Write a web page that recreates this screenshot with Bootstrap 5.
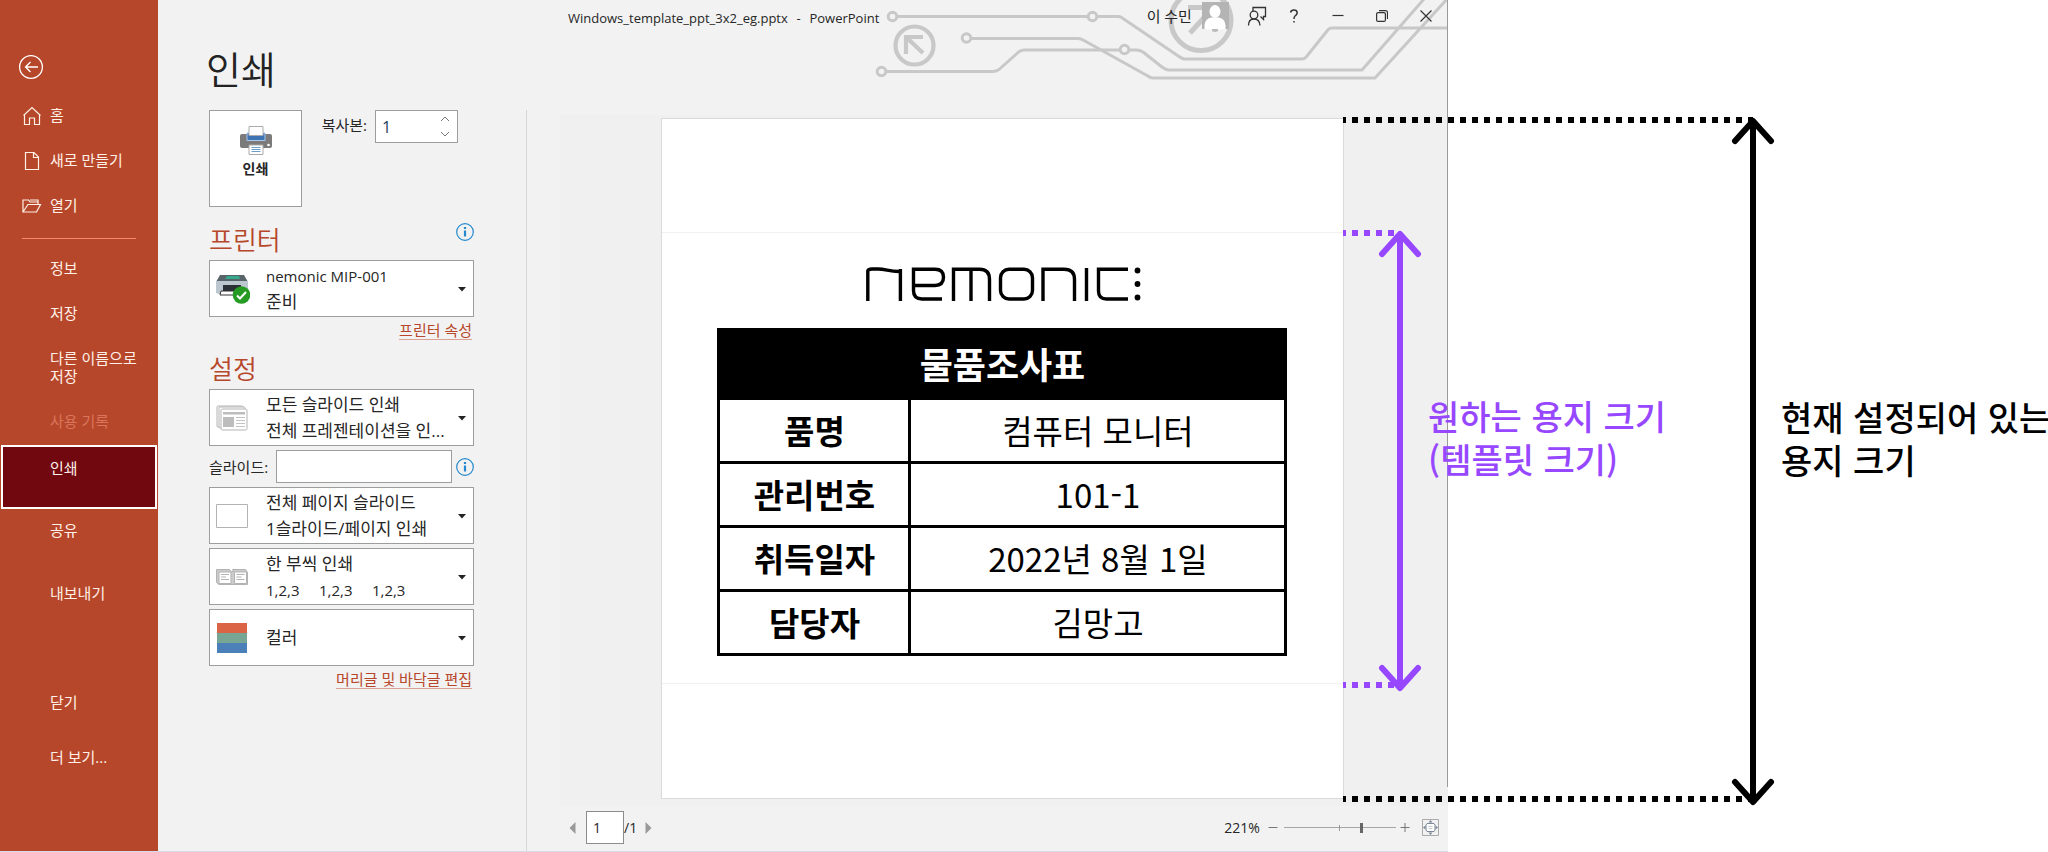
<!DOCTYPE html>
<html lang="ko">
<head>
<meta charset="utf-8">
<meta name="viewport" content="width=device-width, initial-scale=1">
<title>Windows_template_ppt_3x2_eg.pptx - PowerPoint</title>
<link href="https://cdn.jsdelivr.net/npm/bootstrap@5.3.0/dist/css/bootstrap.min.css" rel="stylesheet">
<style>
  :root { --brand: #b7472a; --pane: #f2f2f2; --edge: #9d9d9d; --ink: #262626; --guide: #9747ff; }
  body { font-family: "Open Sans", "Noto Sans CJK KR", sans-serif; font-size: 15px; line-height: 22px; color: var(--ink); background: #fff; overflow: hidden; }
  button { color: inherit; }
  .app { width: 70.7vw; min-height: 100vh; background: var(--pane); border-bottom: 1px solid #d5d9ea; position: relative; }
  .app::after { content: ""; position: absolute; top: 0; right: 0; bottom: 64px; width: 1px; background: #9a9a9a; }

  /* backstage navigation */
  .side { width: 158px; background: var(--brand); color: #fff; padding-top: 40px; padding-bottom: 66px; }
  .side a { color: #fff0e8; text-decoration: none; display: flex; min-height: 45px; padding: 12px 20px 10px 50px; line-height: 18px; }
  .side a.with-icon { padding-left: 22px; gap: 8px; }
  .side a.back { padding: 0 0 0 18px; min-height: 54px; }
  .side a.tall { min-height: 63px; }
  .side a.disabled { color: #d9755c; pointer-events: none; }
  .side a.active { background: #710810; border: 2px solid #fff; min-height: 64px; margin: 0 1px; padding-left: 47px; }
  .side a.low { min-height: 55px; padding-top: 18px; }
  .side hr { margin: 9px 22px 8px; border-top: 1px solid #f58b69; opacity: 1; }

  /* title bar */
  .titlebar { height: 32px; position: relative; }
  .titlebar .doc { font-size: 13px; line-height: 18px; padding: 9px 0 0 410px; white-space: pre; position: relative; }
  .titlebar .doc span { margin: 0 2px; }
  .titlebar .who { position: relative; }
  .circuit { position: absolute; top: 0; right: 0; }
  .win-btn { width: 44px; height: 32px; border: 0; background: none; padding: 0; display: flex; align-items: center; justify-content: center; }
  .win-btn.slim { width: 30px; }

  /* print settings */
  .settings { width: 369px; padding: 14px 0 0 51px; }
  .settings h1 { font-size: 38px; line-height: 46px; margin: 0 0 18px -3px; font-weight: 350; color: #222; }
  .settings h2 { font-size: 26px; line-height: 34px; margin: 0 0 3px; color: var(--brand); font-weight: 350; }
  .settings-body { border-right: 1px solid #d6d6d6; padding-right: 52px; }
  .print-btn { width: 93px; height: 97px; border: 1px solid var(--edge); background: #fff; font-size: 14px; font-weight: 700; padding: 0 0 12px; gap: 3px; }
  .box { border: 1px solid var(--edge); border-radius: 0; background: #fff; height: 33px; }
  .copies { width: 83px; position: relative; }
  .copies input { border: 0; width: 60px; background: none; padding: 0 0 0 6px; font-size: 16px; color: #24405c; appearance: textfield; -moz-appearance: textfield; outline: 0; }
  .copies input::-webkit-inner-spin-button { appearance: none; margin: 0; }
  .copies .spin { width: 18px; }
  .copies .spin button { border: 0; background: none; padding: 0; line-height: 0; flex: 1; }
  .picker { width: 100%; height: 57px; border: 1px solid var(--edge); background: #fff; display: flex; align-items: center; text-align: left; padding: 0 6px; font-size: 17px; line-height: 26px; }
  .picker svg.pic { width: 34px; flex: none; margin-right: 16px; }
  .picker .lines { flex: 1; min-width: 0; white-space: pre; }
  .latin { font-size: 15px; }
  .more-link { color: var(--brand); text-decoration: none; border-bottom: 1px solid #dba294; line-height: 17px; display: inline-block; }
  .link-row { text-align: right; line-height: 20px; padding: 3px 2px 0 0; margin-bottom: 12px; }
  .info { width: 18px; height: 18px; padding: 0; border: 0; background: none; line-height: 0; }

  /* preview */
  .stage { margin: 83px 0 0 33px; background: #f0f0f0; padding: 3px 3px 7px 0; }
  .slide { width: 77.2%; aspect-ratio: 683 / 681; background: #fff; border: 1px solid #dadada; position: relative; display: grid; grid-template-rows: 113fr 452fr 114fr; }
  .template { border-top: 1px solid #f1f1f1; border-bottom: 1px solid #f1f1f1; position: relative; padding-top: 34px; }
  .sheet { width: 570px; margin-top: 27px; table-layout: fixed; border-collapse: collapse; color: #000; text-align: center; font-family: "Noto Sans CJK KR", sans-serif; font-size: 33px; line-height: 40px; }
  .sheet col.key { width: 191px; }
  .sheet th, .sheet td { border: 3px solid #000; height: 64px; padding: 0 0 2px; vertical-align: middle; }
  .sheet td { font-weight: 400; }
  .sheet thead th { background: #000; color: #fff; font-size: 36px; height: 69px; }

  /* measuring guides laid over the preview */
  .measure { position: absolute; left: 100%; display: flex; z-index: 2; color: var(--guide); }
  .measure .rail { position: relative; width: 57px; flex: none; }
  .measure .rail::before, .measure .rail::after { content: ""; position: absolute; left: 0; right: 0; height: 6px; background: repeating-linear-gradient(90deg, currentColor 0 3px, transparent 3px 9px, currentColor 9px 12px) 0 0 / 12px 6px; }
  .measure .rail::before { top: 0; }
  .measure .rail::after { bottom: 0; }
  .measure .shaft { position: absolute; right: -3px; top: 6px; bottom: 4px; width: 6px; background: currentColor; }
  .measure svg { position: absolute; right: -22px; }
  .measure .head-up { top: 0; }
  .measure .head-down { bottom: -4px; }
  .measure p { margin: 0; align-self: center; font-family: "Noto Sans CJK KR", sans-serif; font-weight: 500; font-size: 34px; line-height: 43px; white-space: nowrap; padding: 0 0 44px 28px; }
  .measure.template-size { top: -3px; bottom: -5px; }
  .measure.paper-size { top: -2px; bottom: -4px; color: #000; }
  .measure.paper-size .rail { width: 410px; }

  /* footer */
  .foot { height: 43px; margin: 0 9px 0 42px; font-size: 14px; }
  .foot button { border: 0; background: none; padding: 0; line-height: 0; }
  .foot .page-no { width: 38px; height: 33px; border: 1px solid #8c8c8c; padding: 0 0 0 6px; margin: 0 0 0 10px; color: inherit; }
  .zoomer { width: 112px; height: 12px; appearance: none; -webkit-appearance: none; margin: 0 4px 0 6px; background: linear-gradient(#999, #999) 50% 3px / 1px 6px no-repeat, linear-gradient(#a5a5a5, #a5a5a5) 0 5px / 100% 1px no-repeat; }
  .zoomer::-webkit-slider-thumb { -webkit-appearance: none; width: 3px; height: 10px; background: #666; border: 0; }
</style>
</head>
<body>
<div class="app d-flex">
  <nav class="side d-flex flex-column flex-shrink-0" aria-label="파일">
    <a href="#" class="back align-items-center" aria-label="뒤로">
      <svg width="26" height="26" viewBox="0 0 26 26" fill="none" stroke="#fff" stroke-width="1.3"><circle cx="13" cy="13" r="11.4"/><path d="M20 13H7.500M12.500 8l-5 5 5 5"/></svg>
    </a>
    <a href="#" class="with-icon"><svg width="20" height="20" viewBox="0 0 20 20" fill="none" stroke="#fff0e8" stroke-width="1.2"><path d="M1.500 9.500 10 1.500l8.500 8M2.500 9v9.500h5V12h5v6.500h5V9"/></svg>홈</a>
    <a href="#" class="with-icon"><svg width="20" height="20" viewBox="0 0 20 20" fill="none" stroke="#fff0e8" stroke-width="1.200"><path d="M3.500 1.500h8.500l4.500 4.500v12.500h-13zM11.500 1.500V6.500h5"/></svg>새로 만들기</a>
    <a href="#" class="with-icon"><svg width="20" height="20" viewBox="0 0 20 20" fill="none" stroke="#fff0e8" stroke-width="1.200"><path d="M1 16V4h5.500l1.500 2h8v2.500M1 16 6 8.500h12.500L14.500 16zM8 4h8v2"/></svg>열기</a>
    <hr>
    <a href="#">정보</a>
    <a href="#">저장</a>
    <a href="#" class="tall">다른 이름으로<br>저장</a>
    <a href="#" class="disabled" aria-disabled="true">사용 기록</a>
    <a href="#" class="active" aria-current="page">인쇄</a>
    <a href="#" class="tall">공유</a>
    <a href="#" class="tall">내보내기</a>
    <div class="mt-auto">
      <a href="#" class="low">닫기</a>
      <a href="#" class="low">더 보기...</a>
    </div>
  </nav>

  <div class="d-flex flex-column flex-grow-1">
    <header class="titlebar d-flex justify-content-between">
      <svg class="circuit" width="575" height="85" viewBox="873 0 575 85" fill="none" stroke="#c8c8c8" stroke-width="3" stroke-linejoin="round" aria-hidden="true">
        <path d="M897 16.500H1088M1097 16.500h21q3 0 5 2l56 38q3 2.500 6 2.500h117q3 0 5-3l20-25q2-3 5-3h116"/>
        <path d="M971 38.500h107q3 0 6 2l63 35q3 2.500 6 2.500h222l73-80"/>
        <path d="M886 71.500h107q3 0 6-2l19-17q3-2.500 6-2.500h95M1129 50h7q4 0 7 2l19 15q4 3 7 3h193l62-71"/>
        <circle cx="892.500" cy="16.500" r="4.300"/><circle cx="1092.500" cy="16.500" r="4.300"/><circle cx="966.500" cy="38" r="4.300"/><circle cx="881.500" cy="71.500" r="4.300"/><circle cx="1124.500" cy="49.500" r="4.300"/>
        <g stroke-width="4.200" stroke-linejoin="miter"><circle cx="914.500" cy="45.500" r="19"/><path d="M906 54V37h17M906 37l17 16"/></g>
        <g stroke-width="5"><circle cx="1201" cy="20.500" r="30"/><path d="M1188 7.500h22M1190 33l20-22"/></g>
      </svg>
      <div class="doc">Windows_template_ppt_3x2_eg.pptx  <span>-</span>  PowerPoint</div>
      <div class="who d-flex align-items-center">
        <span>이 수민</span>
        <svg class="ms-1 me-2" width="34" height="32" viewBox="1195 0 34 32" aria-hidden="true"><path fill="#b4b4b4" d="M1201 2h27v27h-27z"/><g fill="#fff"><ellipse cx="1214" cy="11.500" rx="5.500" ry="6.500"/><path d="M1203.500 29v-4q1-7 7-7.500h7q6 .5 7 7.500v4q-10.500 1-21 0z"/></g><path fill="#bbb" d="M1211 29h6v2q-3 2-6 0z"/></svg>
        <button class="win-btn slim ms-1" aria-label="피드백"><svg width="20" height="21" viewBox="0 0 20 21" fill="none" stroke="#333" stroke-width="1.300"><path d="M6 5V1.500h12.500v9h-2v3l-3-3M1.500 19.500q0-6.500 5.500-6.500t6 6.500"/><circle cx="7" cy="9" r="3.800"/></svg></button>
        <button class="win-btn" aria-label="도움말"><svg width="10" height="14" viewBox="0 0 10 14" fill="none" stroke="#333" stroke-width="1.500"><path d="M1.500 3.500Q2 1 5 1t3.200 2.800Q8.200 5.500 6 7 5 7.800 5 10M5 12v1.500"/></svg></button>
        <button class="win-btn" aria-label="최소화"><svg width="12" height="12" viewBox="0 0 12 12" stroke="#333" stroke-width="1.200"><path d="M.500 5.500h11"/></svg></button>
        <button class="win-btn" aria-label="이전 크기로 복원"><svg width="12" height="12" viewBox="0 0 12 12" fill="none" stroke="#333" stroke-width="1.200"><rect x=".600" y="2.600" width="8.800" height="8.800" rx="1.500"/><path d="M3 .600h6.500q2 0 2 2V9"/></svg></button>
        <button class="win-btn" aria-label="닫기"><svg width="12" height="12" viewBox="0 0 12 12" stroke="#333" stroke-width="1.200"><path d="M.500.500l11 11M11.500.500l-11 11"/></svg></button>
      </div>
    </header>

    <div class="d-flex flex-grow-1">
      <section class="settings d-flex flex-column flex-shrink-0">
        <h1>인쇄</h1>
        <div class="settings-body flex-grow-1">
          <div class="d-flex align-items-start">
            <button class="print-btn d-flex flex-column align-items-center justify-content-center">
              <svg width="34" height="30" viewBox="0 0 34 30" aria-hidden="true"><rect x="1" y="9" width="32" height="14" rx="2" fill="#7b7b7b"/><path fill="#3f74b5" stroke="#a9c8ea" d="M8 8h18v7.500H8z"/><path fill="#fff" stroke="#aaa" d="M10 1.500h14v9H10zM10 20h14v9.500H10z"/><path stroke="#6ba0cc" d="M12.500 22.500h9M12.500 24.500h9M12.500 26.500h9"/><circle cx="29.500" cy="20" r="1.300" fill="#fff"/></svg>
              인쇄
            </button>
            <label class="ms-auto me-2 pt-1" for="copies">복사본:</label>
            <div class="box copies d-flex me-3">
              <input id="copies" type="number" value="1" min="1">
              <div class="spin d-flex flex-column">
                <button aria-label="늘리기"><svg width="10" height="6" viewBox="0 0 10 6" fill="none" stroke="#777"><path d="M1 5l4-4 4 4"/></svg></button>
                <button aria-label="줄이기"><svg width="10" height="6" viewBox="0 0 10 6" fill="none" stroke="#777"><path d="M1 1l4 4 4-4"/></svg></button>
              </div>
            </div>
          </div>

          <div class="d-flex justify-content-between mt-3">
            <h2>프린터</h2>
            <button class="info" aria-label="프린터 정보"><svg width="18" height="18" viewBox="0 0 18 18" fill="none" stroke="#2489ce"><circle cx="9" cy="9" r="8.300" stroke-width="1.200"/><path stroke-width="2.200" d="M9 7.500V13.500M9 4v2"/></svg></button>
          </div>
          <button class="picker" aria-haspopup="listbox">
            <svg class="pic" height="32" viewBox="0 0 34 32" aria-hidden="true"><path fill="#59636a" d="M4 2h24l4 7H0z"/><path fill="#36a98b" d="M11 3h12l1 3H9z"/><path fill="#bcc6ce" d="M0 8h32v12l-3 1H3l-3-1z"/><path fill="#2b3036" d="M7 12h18v7H7z"/><path fill="#fff" stroke="#333" d="M5 18h20l2 4H4z"/><circle cx="25.500" cy="22" r="8.800" fill="#259b24"/><path fill="none" stroke="#fff" stroke-width="2" d="M21 22.500l3 3 6-6.500"/></svg>
            <span class="lines"><span class="latin">nemonic MIP-001</span><br>준비</span>
            <svg width="10" height="6" viewBox="0 0 10 6"><path fill="#222" d="M1 1h8L5 5.500z"/></svg>
          </button>
          <div class="link-row"><a href="#" class="more-link">프린터 속성</a></div>

          <h2>설정</h2>
          <div class="d-grid gap-1">
            <button class="picker" aria-haspopup="listbox">
              <svg class="pic" height="26" viewBox="0 0 34 26" fill="#fff" stroke="#b3b3b3" aria-hidden="true"><rect x="1" y="1" width="26" height="21" rx="1"/><rect x="3" y="2" width="26" height="21" rx="1"/><rect x="5" y="4" width="26" height="21" rx="1.500"/><path fill="#bdbdbd" stroke="none" d="M7 7h22v2.500H7zM7 12h11v10H7z"/><path stroke="#c4c4c4" d="M20 12.500h9M20 15.500h9M20 18.500h9M20 21.500h9"/></svg>
              <span class="lines">모든 슬라이드 인쇄<br>전체 프레젠테이션을 인...</span>
              <svg width="10" height="6" viewBox="0 0 10 6"><path fill="#222" d="M1 1h8L5 5.500z"/></svg>
            </button>
            <div class="d-flex align-items-center">
              <label for="range">슬라이드:</label>
              <input id="range" class="box flex-grow-1 ms-2" type="text" size="1">
              <button class="info ms-1" aria-label="슬라이드 범위 정보"><svg width="18" height="18" viewBox="0 0 18 18" fill="none" stroke="#2489ce"><circle cx="9" cy="9" r="8.300" stroke-width="1.200"/><path stroke-width="2.200" d="M9 7.500V13.500M9 4v2"/></svg></button>
            </div>
            <button class="picker" aria-haspopup="listbox">
              <svg class="pic" height="26" viewBox="0 0 34 26" aria-hidden="true"><path fill="#fff" stroke="#b3b3b3" d="M.500 1.500h31v23H.500z"/></svg>
              <span class="lines">전체 페이지 슬라이드<br>1슬라이드/페이지 인쇄</span>
              <svg width="10" height="6" viewBox="0 0 10 6"><path fill="#222" d="M1 1h8L5 5.500z"/></svg>
            </button>
            <button class="picker" aria-haspopup="listbox">
              <svg class="pic" height="18" viewBox="0 0 34 18" fill="#fff" stroke="#b3b3b3" aria-hidden="true"><path fill="#ccc" d="M.500 1.500h13l2 2h2l-1-2h13l2 3v12H3l-2.500-2z"/><path d="M3 4h12v11.500H3zM18.500 4h12v11.500h-12z"/><path d="M5 6.500h8M5 9h5M5 11.500h8M20.500 6.500h8M20.500 9h5M20.500 11.500h8"/></svg>
              <span class="lines">한 부씩 인쇄<br><span class="latin">1,2,3     1,2,3     1,2,3</span></span>
              <svg width="10" height="6" viewBox="0 0 10 6"><path fill="#222" d="M1 1h8L5 5.500z"/></svg>
            </button>
            <button class="picker" aria-haspopup="listbox">
              <svg class="pic" height="32" viewBox="0 0 34 32" aria-hidden="true"><path fill="#db6445" d="M1 1h30v10H1z"/><path fill="#77a794" d="M1 11h30v10H1z"/><path fill="#4c80b8" d="M1 21h30v10H1z"/></svg>
              <span class="lines">컬러</span>
              <svg width="10" height="6" viewBox="0 0 10 6"><path fill="#222" d="M1 1h8L5 5.500z"/></svg>
            </button>
          </div>
          <div class="link-row"><a href="#" class="more-link">머리글 및 바닥글 편집</a></div>
        </div>
      </section>

      <main class="d-flex flex-column flex-grow-1">
        <div class="stage d-flex justify-content-center">
          <div class="slide">
            <div></div>
            <div class="template d-flex flex-column align-items-center">
              <svg class="ms-1" width="276" height="34" viewBox="0 0 276 34" fill="none" stroke="#000" stroke-width="3.400" role="img" aria-label="nemonic:">
                <path d="M1.800 34V4Q2 2 6 2h6c8 0 12 3 22.400 2.500M34.400 2v32"/>
                <path d="M76 32H56q-8.500 0-8.500-8.500V2.200H69q8.500 0 8.500 8t-8.500 8.300H47.500"/>
                <path d="M87.500 34V2.200h26q10 0 10 10V34M105 2.200V34"/>
                <rect x="134.500" y="2.200" width="32" height="29.800" rx="8.500"/>
                <path d="M177 34V2.200h21q10.500 0 10.500 10V34M220.500 1v33"/>
                <path d="M262 2.200h-29.500V24q0 8 8 8H262"/>
                <g fill="#000" stroke="none"><circle cx="271.500" cy="3.500" r="2.900"/><circle cx="271.500" cy="17" r="2.900"/><circle cx="271.500" cy="30.500" r="2.900"/></g>
              </svg>
              <table class="sheet">
                <colgroup><col class="key"><col></colgroup>
                <thead><tr><th colspan="2">물품조사표</th></tr></thead>
                <tbody>
                  <tr><th scope="row">품명</th><td>컴퓨터 모니터</td></tr>
                  <tr><th scope="row">관리번호</th><td>101-1</td></tr>
                  <tr><th scope="row">취득일자</th><td>2022년 8월 1일</td></tr>
                  <tr><th scope="row">담당자</th><td>김망고</td></tr>
                </tbody>
              </table>
              <div class="measure template-size">
                <div class="rail"><div class="shaft"></div>
                  <svg class="head-up" width="44" height="28" viewBox="0 0 44 28" fill="none" stroke="currentColor" stroke-width="6" stroke-linecap="round" stroke-linejoin="round"><path d="M4 24 22 4l18 20"/></svg>
                  <svg class="head-down" width="44" height="28" viewBox="0 0 44 28" fill="none" stroke="currentColor" stroke-width="6" stroke-linecap="round" stroke-linejoin="round"><path d="M4 4l18 20L40 4"/></svg>
                </div>
                <p>원하는 용지 크기<br>(템플릿 크기)</p>
              </div>
            </div>
            <div></div>
            <div class="measure paper-size">
              <div class="rail"><div class="shaft"></div>
                <svg class="head-up" width="44" height="28" viewBox="0 0 44 28" fill="none" stroke="currentColor" stroke-width="6" stroke-linecap="round" stroke-linejoin="round"><path d="M4 24 22 4l18 20"/></svg>
                <svg class="head-down" width="44" height="28" viewBox="0 0 44 28" fill="none" stroke="currentColor" stroke-width="6" stroke-linecap="round" stroke-linejoin="round"><path d="M4 4l18 20L40 4"/></svg>
              </div>
              <p>현재 설정되어 있는<br>용지 크기</p>
            </div>
          </div>
        </div>
        <footer class="foot d-flex align-items-center">
          <button aria-label="이전 페이지"><svg width="7" height="12" viewBox="0 0 7 12"><path fill="#999" d="M6.500 0v12L.500 6z"/></svg></button>
          <input class="page-no" type="text" value="1" aria-label="페이지">/1
          <button class="ms-2" aria-label="다음 페이지"><svg width="7" height="12" viewBox="0 0 7 12"><path fill="#999" d="M.500 0v12l6-6z"/></svg></button>
          <label class="ms-auto me-2" for="zoom">221%</label>
          <button aria-label="축소"><svg width="10" height="10" viewBox="0 0 10 10" stroke="#777"><path d="M.500 4.500h9"/></svg></button>
          <input id="zoom" class="zoomer" type="range" min="0" max="100" value="70">
          <button aria-label="확대"><svg width="10" height="10" viewBox="0 0 10 10" stroke="#777"><path d="M.500 4.500h9M5 0v9"/></svg></button>
          <button class="ms-2 ps-1" aria-label="페이지 맞춤"><svg width="17" height="17" viewBox="0 0 17 17" fill="none" stroke="#8a8f98"><path stroke="#aaa" d="M.500.500h16v16H.500z"/><path fill="#fff" stroke="#7d8797" d="M5 4.500h7L13 6v5l-1 1.500H5L4 11V6z"/><path fill="#7d8797" stroke="none" d="M8.500 1 10.500 3.500h-4zM8.500 16l2-2.500h-4zM1 8.500l2.500-2v4zM16 8.500l-2.500-2v4z"/><path stroke="#c9ced6" d="M6.500 7.500h4M6.500 9.500h4"/></svg></button>
        </footer>
      </main>
    </div>
  </div>
</div>
<script src="https://cdn.jsdelivr.net/npm/bootstrap@5.3.0/dist/js/bootstrap.bundle.min.js"></script>
</body>
</html>
